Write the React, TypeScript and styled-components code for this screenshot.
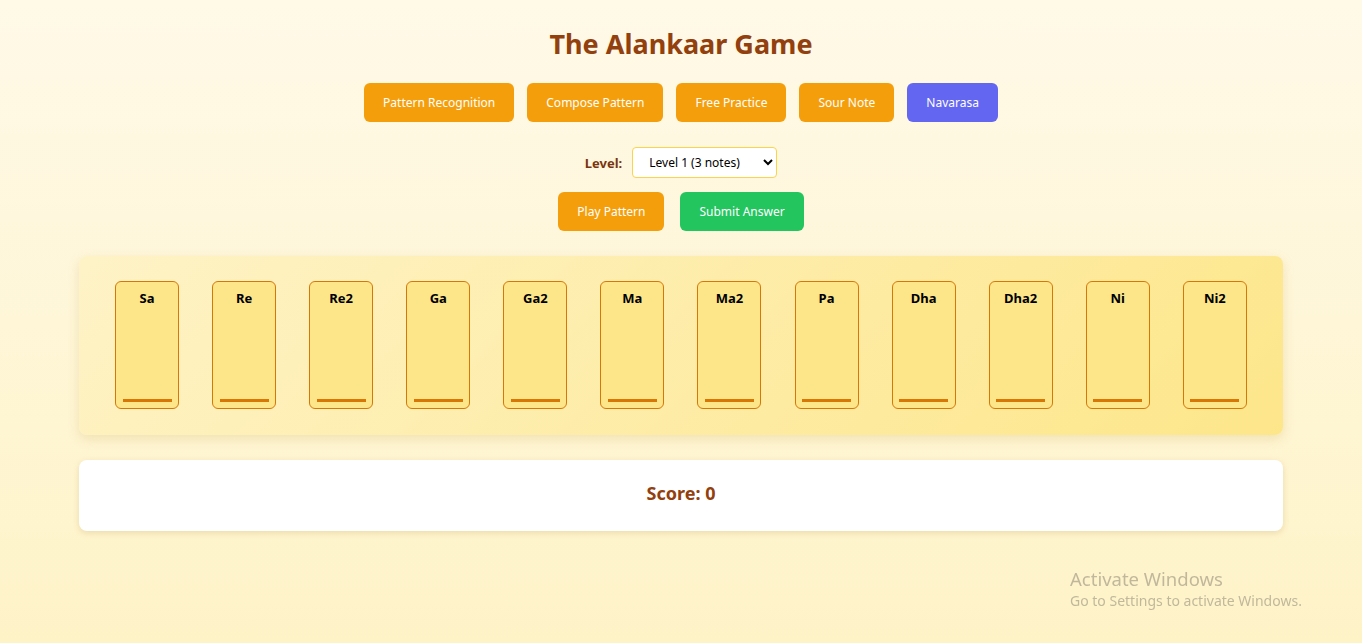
import React from "react";
import styled, { createGlobalStyle } from "styled-components";

const Global = createGlobalStyle`
  html, body { margin: 0; padding: 0; }
  body {
    font-family: "Noto Sans", "Open Sans", sans-serif;
    background: linear-gradient(180deg, #fff9e8 0%, #fef3c7 100%);
    min-height: 643px;
  }
`;

const Page = styled.div`
  min-height: 643px;
  box-sizing: border-box;
  padding: 24px 0 40px;
  display: flex;
  flex-direction: column;
  align-items: center;
`;

const Title = styled.h1`
  margin: 0;
  font-size: 27px;
  line-height: 40px;
  font-weight: 700;
  color: #92400e;
`;

const ModeRow = styled.div`
  margin-top: 19px;
  display: flex;
  gap: 13px;
`;

const Btn = styled.button<{ $tone: "orange" | "indigo" | "green" }>`
  font-family: inherit;
  font-size: 12px;
  color: #fff;
  border: none;
  border-radius: 6px;
  height: 39px;
  padding: 0 19px;
  cursor: pointer;
  background: ${(p) =>
    p.$tone === "orange" ? "#f59e0b" : p.$tone === "indigo" ? "#6366f1" : "#22c55e"};
`;

const LevelRow = styled.div`
  margin-top: 25px;
  display: flex;
  align-items: center;
  gap: 10px;
`;

const Label = styled.label`
  font-size: 13px;
  font-weight: 700;
  color: #78350f;
`;

const Select = styled.select`
  font-family: inherit;
  font-size: 12px;
  width: 145px;
  height: 31px;
  padding: 0 8px 0 12px;
  border: 1px solid #fcd34d;
  border-radius: 4px;
  background: #fff;
  color: #000;
`;

const ActionRow = styled.div`
  margin-top: 14px;
  display: flex;
  gap: 16px;
`;

const Keyboard = styled.div`
  margin-top: 25px;
  width: 1204px;
  box-sizing: border-box;
  padding: 25px 36px 26px;
  border-radius: 8px;
  background: linear-gradient(135deg, #fef3c7 0%, #fde68a 100%);
  box-shadow: 0 4px 12px rgba(180, 140, 40, 0.18);
  display: flex;
  justify-content: space-between;
`;

const Key = styled.div`
  width: 64px;
  height: 128px;
  box-sizing: border-box;
  border: 1px solid #d97706;
  border-radius: 6px;
  background: #fde68a;
  display: flex;
  flex-direction: column;
  align-items: center;
  justify-content: space-between;
  padding: 7px 7px 6px;
`;

const KeyName = styled.span`
  font-size: 13px;
  font-weight: 700;
  color: #000;
`;

const KeyBar = styled.div`
  width: 49px;
  height: 3px;
  background: #d97706;
`;

const ScoreCard = styled.div`
  margin-top: 25px;
  width: 1204px;
  height: 71px;
  box-sizing: border-box;
  padding-bottom: 6px;
  border-radius: 8px;
  background: #fff;
  box-shadow: 0 2px 6px rgba(160, 120, 40, 0.2);
  display: flex;
  align-items: center;
  justify-content: center;
`;

const Score = styled.h2`
  margin: 0;
  font-size: 18px;
  font-weight: 700;
  color: #92400e;
`;

const Watermark = styled.div`
  position: fixed;
  left: 1070px;
  top: 567px;
  color: rgba(120, 110, 100, 0.45);
  font-family: "Noto Sans", "Open Sans", sans-serif;
`;

const WmTitle = styled.div`
  font-size: 18.5px;
  line-height: 24px;
`;

const WmSub = styled.div`
  font-size: 14px;
  line-height: 20px;
`;

const notes = ["Sa", "Re", "Re2", "Ga", "Ga2", "Ma", "Ma2", "Pa", "Dha", "Dha2", "Ni", "Ni2"];

export default function App() {
  return (
    <>
      <Global />
      <Page>
        <Title>The Alankaar Game</Title>
        <ModeRow>
          <Btn $tone="orange">Pattern Recognition</Btn>
          <Btn $tone="orange">Compose Pattern</Btn>
          <Btn $tone="orange">Free Practice</Btn>
          <Btn $tone="orange">Sour Note</Btn>
          <Btn $tone="indigo">Navarasa</Btn>
        </ModeRow>
        <LevelRow>
          <Label>Level:</Label>
          <Select defaultValue="1">
            <option value="1">Level 1 (3 notes)</option>
            <option value="2">Level 2 (4 notes)</option>
          </Select>
        </LevelRow>
        <ActionRow>
          <Btn $tone="orange">Play Pattern</Btn>
          <Btn $tone="green">Submit Answer</Btn>
        </ActionRow>
        <Keyboard>
          {notes.map((n) => (
            <Key key={n}>
              <KeyName>{n}</KeyName>
              <KeyBar />
            </Key>
          ))}
        </Keyboard>
        <ScoreCard>
          <Score>Score: 0</Score>
        </ScoreCard>
      </Page>
      <Watermark>
        <WmTitle>Activate Windows</WmTitle>
        <WmSub>Go to Settings to activate Windows.</WmSub>
      </Watermark>
    </>
  );
}
